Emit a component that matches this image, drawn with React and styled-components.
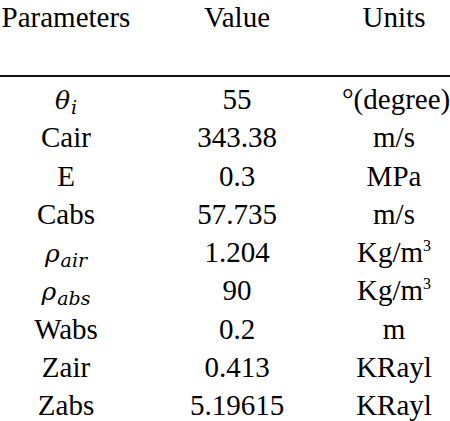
import React from "react";
import styled, { createGlobalStyle } from "styled-components";

const GlobalStyle = createGlobalStyle`
  html, body {
    margin: 0;
    padding: 0;
    background: #ffffff;
    overflow: hidden;
  }
`;

const Table = styled.div`
  width: 450px;
  height: 421px;
  overflow: hidden;
  font-family: "Liberation Serif", "Times New Roman", serif;
  font-size: 29px;
  color: #000000;
`;

const Grid = styled.div`
  display: grid;
  grid-template-columns: 132px 210px 104px;
`;

const HeaderRow = styled(Grid)`
  line-height: 34px;
  padding-bottom: 41px;
  border-bottom: 2px solid #111;
`;

const Body = styled.div`
  padding-top: 3px;
`;

const Row = styled(Grid)`
  line-height: 38.3px;
  height: 38.3px;
`;

const Cell = styled.div`
  text-align: center;
  white-space: nowrap;
`;

// math-style symbols (greek letter + italic subscript)
const Sym = styled.span`
  font-family: "DejaVu Serif", "Liberation Serif", serif;
  font-style: italic;
  font-size: 25px;
`;

const Sub = styled.span`
  font-family: "DejaVu Serif", "Liberation Serif", serif;
  font-style: italic;
  font-size: 19px;
  position: relative;
  top: 5px;
  margin-left: 1px;
`;

const Sup = styled.span`
  font-size: 16px;
  line-height: 1;
  position: relative;
  top: -11px;
`;

const rows = [
  { p: <><Sym>θ</Sym><Sub>i</Sub></>, v: "55", u: "°(degree)" },
  { p: "Cair", v: "343.38", u: "m/s" },
  { p: "E", v: "0.3", u: "MPa" },
  { p: "Cabs", v: "57.735", u: "m/s" },
  { p: <><Sym>ρ</Sym><Sub>air</Sub></>, v: "1.204", u: <>Kg/m<Sup>3</Sup></> },
  { p: <><Sym>ρ</Sym><Sub>abs</Sub></>, v: "90", u: <>Kg/m<Sup>3</Sup></> },
  { p: "Wabs", v: "0.2", u: "m" },
  { p: "Zair", v: "0.413", u: "KRayl" },
  { p: "Zabs", v: "5.19615", u: "KRayl" },
];

export default function App() {
  return (
    <Table>
      <GlobalStyle />
      <HeaderRow>
        <Cell>Parameters</Cell>
        <Cell>Value</Cell>
        <Cell>Units</Cell>
      </HeaderRow>
      <Body>
        {rows.map((r, i) => (
          <Row key={i}>
            <Cell>{r.p}</Cell>
            <Cell>{r.v}</Cell>
            <Cell>{r.u}</Cell>
          </Row>
        ))}
      </Body>
    </Table>
  );
}
